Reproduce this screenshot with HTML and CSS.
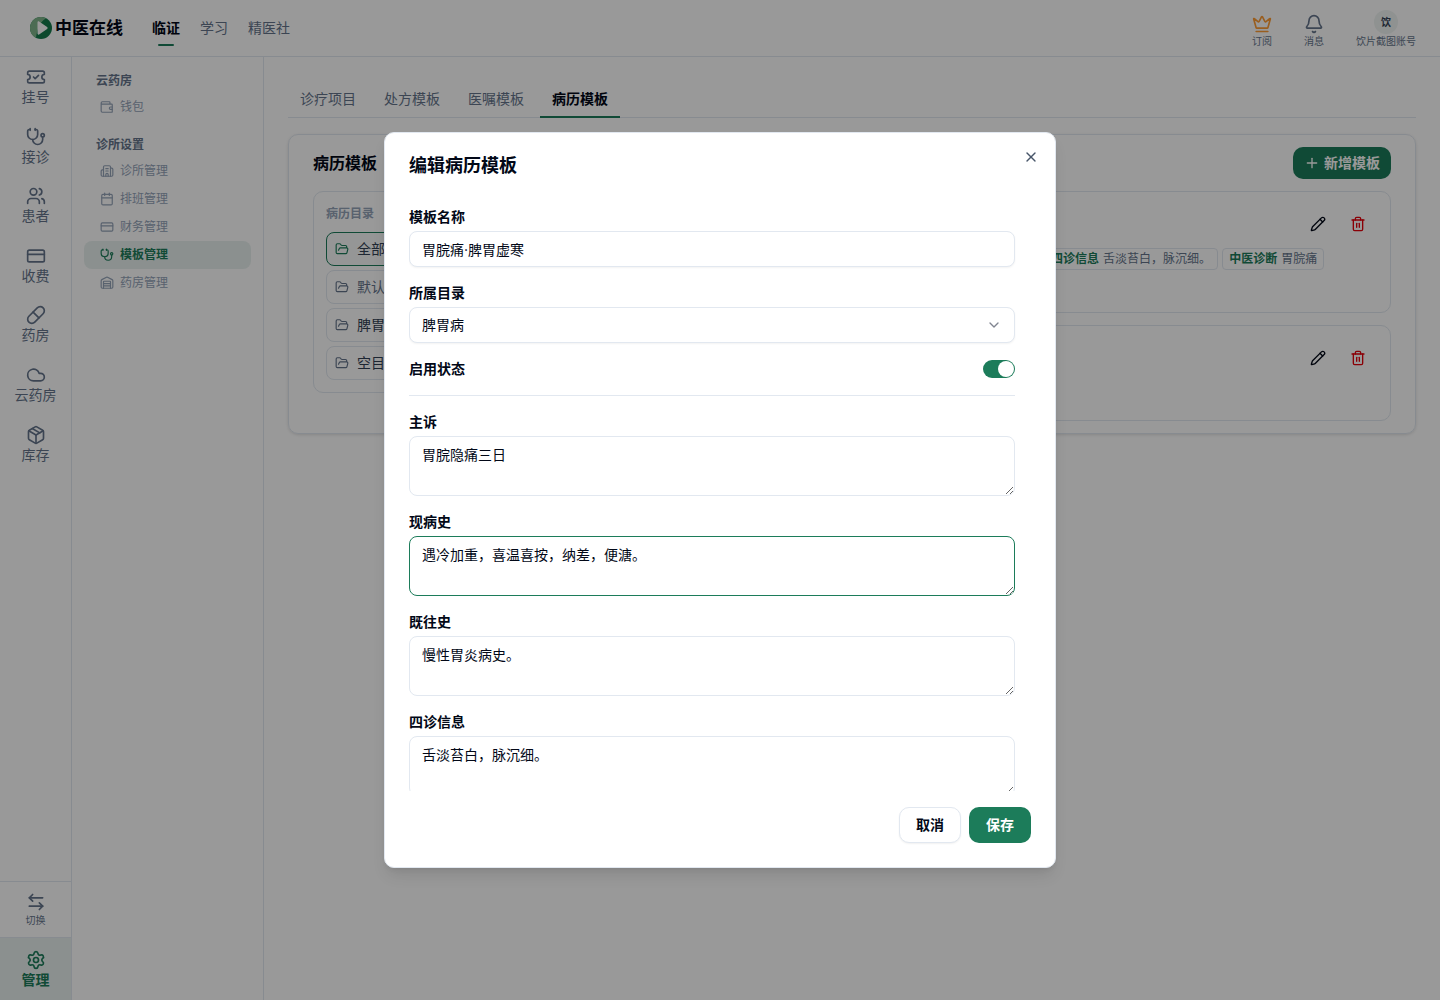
FILE: index.html
```html
<!DOCTYPE html>
<html lang="zh-CN">
<head>
<meta charset="utf-8">
<meta name="viewport" content="width=device-width, initial-scale=1">
<title>中医在线 - 模板管理</title>
<link rel="stylesheet" href="styles.css">
</head>
<body>
<svg class="sprite" aria-hidden="true">
  <symbol id="i-ticket" viewBox="0 0 24 24"><path d="M2 9a3 3 0 1 1 0 6v2a2 2 0 0 0 2 2h16a2 2 0 0 0 2-2v-2a3 3 0 1 1 0-6V7a2 2 0 0 0-2-2H4a2 2 0 0 0-2 2Z"/><path d="m9 12 2 2 4-4"/></symbol>
  <symbol id="i-steth" viewBox="0 0 24 24"><path d="M11 2v2"/><path d="M5 2v2"/><path d="M5 3H4a2 2 0 0 0-2 2v4a6 6 0 0 0 12 0V5a2 2 0 0 0-2-2h-1"/><path d="M8 15a6 6 0 0 0 12 0v-3"/><circle cx="20" cy="10" r="2"/></symbol>
  <symbol id="i-users" viewBox="0 0 24 24"><path d="M16 21v-2a4 4 0 0 0-4-4H6a4 4 0 0 0-4 4v2"/><circle cx="9" cy="7" r="4"/><path d="M22 21v-2a4 4 0 0 0-3-3.87"/><path d="M16 3.13a4 4 0 0 1 0 7.75"/></symbol>
  <symbol id="i-card" viewBox="0 0 24 24"><rect width="20" height="14" x="2" y="5" rx="2"/><path d="M2 10h20"/></symbol>
  <symbol id="i-pill" viewBox="0 0 24 24"><path d="m10.5 20.5 10-10a4.95 4.95 0 1 0-7-7l-10 10a4.95 4.95 0 1 0 7 7Z"/><path d="m8.5 8.5 7 7"/></symbol>
  <symbol id="i-cloud" viewBox="0 0 24 24"><path d="M17.5 19H9a7 7 0 1 1 6.71-9h1.79a4.5 4.5 0 1 1 0 9Z"/></symbol>
  <symbol id="i-box" viewBox="0 0 24 24"><path d="M11 21.73a2 2 0 0 0 2 0l7-4A2 2 0 0 0 21 16V8a2 2 0 0 0-1-1.73l-7-4a2 2 0 0 0-2 0l-7 4A2 2 0 0 0 3 8v8a2 2 0 0 0 1 1.73z"/><path d="M12 22V12"/><path d="M3.3 7 12 12l8.7-5"/><path d="m7.5 4.27 9 5.15"/></symbol>
  <symbol id="i-swap" viewBox="0 0 24 24"><path d="M8 3 4 7l4 4"/><path d="M4 7h16"/><path d="m16 21 4-4-4-4"/><path d="M20 17H4"/></symbol>
  <symbol id="i-gear" viewBox="0 0 24 24"><path d="M9.671 4.136a2.34 2.34 0 0 1 4.659 0 2.34 2.34 0 0 0 3.319 1.915 2.34 2.34 0 0 1 2.33 4.033 2.34 2.34 0 0 0 0 3.831 2.34 2.34 0 0 1-2.33 4.033 2.34 2.34 0 0 0-3.319 1.915 2.34 2.34 0 0 1-4.659 0 2.34 2.34 0 0 0-3.32-1.915 2.34 2.34 0 0 1-2.33-4.033 2.34 2.34 0 0 0 0-3.831A2.34 2.34 0 0 1 6.35 6.051a2.34 2.34 0 0 0 3.319-1.915"/><circle cx="12" cy="12" r="3"/></symbol>
  <symbol id="i-crown" viewBox="0 0 24 24"><path d="M11.562 3.266a.5.5 0 0 1 .876 0L15.39 8.87a1 1 0 0 0 1.516.294L21.183 5.5a.5.5 0 0 1 .798.519l-2.834 10.246a1 1 0 0 1-.956.734H5.81a1 1 0 0 1-.957-.734L2.02 6.02a.5.5 0 0 1 .798-.519l4.276 3.664a1 1 0 0 0 1.516-.294z"/><path d="M5 21h14"/></symbol>
  <symbol id="i-bell" viewBox="0 0 24 24"><path d="M10.268 21a2 2 0 0 0 3.464 0"/><path d="M3.262 15.326A1 1 0 0 0 4 17h16a1 1 0 0 0 .74-1.673C19.41 13.956 18 12.499 18 8A6 6 0 0 0 6 8c0 4.499-1.411 5.956-2.738 7.326"/></symbol>
  <symbol id="i-wallet" viewBox="0 0 24 24"><path d="M17 7V4a1 1 0 0 0-1-1H4a2 2 0 0 0 0 4h16a1 1 0 0 1 1 1v12a1 1 0 0 1-1 1H4a2 2 0 0 1-2-2V5"/><path d="M21 12h-3a2 2 0 0 0 0 4h3"/></symbol>
  <symbol id="i-building" viewBox="0 0 24 24"><path d="M10 12h4"/><path d="M10 8h4"/><path d="M14 21v-3a2 2 0 0 0-4 0v3"/><path d="M6 10H4a2 2 0 0 0-2 2v7a2 2 0 0 0 2 2h16a2 2 0 0 0 2-2V9a2 2 0 0 0-2-2h-2"/><path d="M6 21V5a2 2 0 0 1 2-2h8a2 2 0 0 1 2 2v16"/></symbol>
  <symbol id="i-calendar" viewBox="0 0 24 24"><path d="M8 2v4"/><path d="M16 2v4"/><rect width="18" height="18" x="3" y="4" rx="2"/><path d="M3 10h18"/></symbol>
  <symbol id="i-warehouse" viewBox="0 0 24 24"><path d="M18 21V10a1 1 0 0 0-1-1H7a1 1 0 0 0-1 1v11"/><path d="M22 19a2 2 0 0 1-2 2H4a2 2 0 0 1-2-2V8a2 2 0 0 1 1.132-1.803l7.95-3.974a2 2 0 0 1 1.837 0l7.948 3.974A2 2 0 0 1 22 8z"/><path d="M6 13h12"/><path d="M6 17h12"/></symbol>
  <symbol id="i-folder" viewBox="0 0 24 24"><path d="m6 14 1.5-2.9A2 2 0 0 1 9.24 10H20a2 2 0 0 1 1.94 2.5l-1.54 6a2 2 0 0 1-1.95 1.5H4a2 2 0 0 1-2-2V5a2 2 0 0 1 2-2h3.9a2 2 0 0 1 1.69.9l.81 1.2a2 2 0 0 0 1.67.9H18a2 2 0 0 1 2 2v2"/></symbol>
  <symbol id="i-plus" viewBox="0 0 24 24"><path d="M5 12h14"/><path d="M12 5v14"/></symbol>
  <symbol id="i-pencil" viewBox="0 0 24 24"><path d="M21.174 6.812a1 1 0 0 0-3.986-3.987L3.842 16.174a2 2 0 0 0-.5.83l-1.321 4.352a.5.5 0 0 0 .623.622l4.353-1.32a2 2 0 0 0 .83-.497z"/><path d="m15 5 4 4"/></symbol>
  <symbol id="i-trash" viewBox="0 0 24 24"><path d="M3 6h18"/><path d="M19 6v14c0 1-1 2-2 2H7c-1 0-2-1-2-2V6"/><path d="M8 6V4c0-1 1-2 2-2h4c1 0 2 1 2 2v2"/><path d="M10 11v6"/><path d="M14 11v6"/></symbol>
  <symbol id="i-x" viewBox="0 0 24 24"><path d="M18 6 6 18"/><path d="m6 6 12 12"/></symbol>
</svg>

<div class="app">
  <header class="topbar">
    <a class="brand" href="#">
      <svg class="logo" viewBox="0 0 22 22" aria-hidden="true">
        <circle cx="11" cy="11" r="11" fill="#157a4c"/>
        <path d="M16 1.200A11 11 0 0 0 6 20.800C7 15 8 6 16 1.200Z" fill="#7fb58a"/>
        <path d="M7.500 5.400v11.200c0 .9.900 1.400 1.600.900l8-5.400c.7-.5.700-1.500 0-2l-8-5.600c-.7-.5-1.600 0-1.600.9Z" fill="#fff"/>
      </svg>
      <span>中医在线</span>
    </a>
    <nav class="topnav">
      <a class="active" href="#">临证</a>
      <a href="#">学习</a>
      <a href="#">精医社</a>
    </nav>
    <div class="tools">
      <a class="tool" href="#"><svg class="icon icon-20 crown"><use href="#i-crown"/></svg><span>订阅</span></a>
      <a class="tool" href="#"><svg class="icon icon-20"><use href="#i-bell"/></svg><span>消息</span></a>
      <a class="tool" href="#"><span class="avatar">饮</span><span>饮片截图账号</span></a>
    </div>
  </header>

  <div class="columns">
    <aside class="rail">
      <nav class="rail-nav">
        <a href="#"><svg class="icon icon-20"><use href="#i-ticket"/></svg>挂号</a>
        <a href="#"><svg class="icon icon-20"><use href="#i-steth"/></svg>接诊</a>
        <a href="#"><svg class="icon icon-20"><use href="#i-users"/></svg>患者</a>
        <a href="#"><svg class="icon icon-20"><use href="#i-card"/></svg>收费</a>
        <a href="#"><svg class="icon icon-20"><use href="#i-pill"/></svg>药房</a>
        <a href="#"><svg class="icon icon-20"><use href="#i-cloud"/></svg>云药房</a>
        <a href="#"><svg class="icon icon-20"><use href="#i-box"/></svg>库存</a>
      </nav>
      <button class="rail-switch" type="button"><svg class="icon icon-20"><use href="#i-swap"/></svg>切换</button>
      <a class="rail-manage" href="#"><svg class="icon icon-20"><use href="#i-gear"/></svg>管理</a>
    </aside>

    <aside class="submenu">
      <section>
        <h2>云药房</h2>
        <a href="#"><svg class="icon icon-14"><use href="#i-wallet"/></svg>钱包</a>
      </section>
      <section>
        <h2>诊所设置</h2>
        <a href="#"><svg class="icon icon-14"><use href="#i-building"/></svg>诊所管理</a>
        <a href="#"><svg class="icon icon-14"><use href="#i-calendar"/></svg>排班管理</a>
        <a href="#"><svg class="icon icon-14"><use href="#i-card"/></svg>财务管理</a>
        <a class="active" href="#"><svg class="icon icon-14"><use href="#i-steth"/></svg>模板管理</a>
        <a href="#"><svg class="icon icon-14"><use href="#i-warehouse"/></svg>药房管理</a>
      </section>
    </aside>

    <main class="main">
      <nav class="tabs">
        <a href="#">诊疗项目</a>
        <a href="#">处方模板</a>
        <a href="#">医嘱模板</a>
        <a class="active" href="#">病历模板</a>
      </nav>
      <section class="panel">
        <div class="panel-head">
          <h1>病历模板</h1>
          <button class="btn btn-primary btn-add" type="button"><svg class="icon icon-16"><use href="#i-plus"/></svg>新增模板</button>
        </div>
        <div class="panel-body">
          <div class="folders">
            <h3>病历目录</h3>
            <button class="folder selected" type="button"><svg class="icon icon-14"><use href="#i-folder"/></svg>全部</button>
            <button class="folder muted" type="button"><svg class="icon icon-14"><use href="#i-folder"/></svg>默认目录</button>
            <button class="folder" type="button"><svg class="icon icon-14"><use href="#i-folder"/></svg>脾胃病</button>
            <button class="folder" type="button"><svg class="icon icon-14"><use href="#i-folder"/></svg>空目录</button>
          </div>
          <div class="templates">
            <article class="template">
              <div class="template-head">
                <h4>胃脘痛·脾胃虚寒</h4>
                <button type="button" aria-label="编辑"><svg class="icon icon-16"><use href="#i-pencil"/></svg></button>
                <button class="danger" type="button" aria-label="删除"><svg class="icon icon-16"><use href="#i-trash"/></svg></button>
              </div>
              <div class="tags">
                <span class="tag"><b>主诉</b>胃脘隐痛三日</span>
                <span class="tag"><b>现病史</b>遇冷加重，喜温喜按，纳差，便溏。</span>
                <span class="tag"><b>既往史</b>慢性胃炎病史。</span>
                <span class="tag"><b>四诊信息</b>舌淡苔白，脉沉细。</span>
                <span class="tag"><b>中医诊断</b>胃脘痛</span>
              </div>
            </article>
            <article class="template">
              <div class="template-head">
                <h4>空白模板</h4>
                <button type="button" aria-label="编辑"><svg class="icon icon-16"><use href="#i-pencil"/></svg></button>
                <button class="danger" type="button" aria-label="删除"><svg class="icon icon-16"><use href="#i-trash"/></svg></button>
              </div>
            </article>
          </div>
        </div>
      </section>
    </main>
  </div>

  <div class="overlay">
    <form class="dialog" role="dialog" aria-modal="true" aria-labelledby="dialog-title">
      <h2 id="dialog-title">编辑病历模板</h2>
      <button class="close" type="button" aria-label="关闭"><svg class="icon icon-16"><use href="#i-x"/></svg></button>
      <div class="dialog-body">
        <div class="field">
          <label for="name">模板名称</label>
          <input class="control" id="name" type="text" value="胃脘痛·脾胃虚寒">
        </div>
        <div class="field">
          <label for="folder">所属目录</label>
          <select class="control" id="folder"><option>脾胃病</option></select>
        </div>
        <div class="toggle">
          <label for="enabled">启用状态</label>
          <input class="switch" id="enabled" type="checkbox" role="switch" checked>
        </div>
        <hr>
        <div class="field">
          <label for="complaint">主诉</label>
          <textarea class="control" id="complaint">胃脘隐痛三日</textarea>
        </div>
        <div class="field">
          <label for="present">现病史</label>
          <textarea class="control current" id="present">遇冷加重，喜温喜按，纳差，便溏。</textarea>
        </div>
        <div class="field">
          <label for="past">既往史</label>
          <textarea class="control" id="past">慢性胃炎病史。</textarea>
        </div>
        <div class="field">
          <label for="exam">四诊信息</label>
          <textarea class="control" id="exam">舌淡苔白，脉沉细。</textarea>
        </div>
      </div>
      <div class="dialog-foot">
        <button class="btn btn-outline" type="button">取消</button>
        <button class="btn btn-primary" type="submit">保存</button>
      </div>
    </form>
  </div>
</div>
</body>
</html>
```
FILE: styles.css
```css
:root {
  --primary: #1c7c5a;
  --primary-soft: #e8f1ef;
  --ink: #020817;
  --slate: #64748b;
  --slate-light: #94a3b8;
  --line: #e2e8f0;
}

* { box-sizing: border-box; }

body {
  margin: 0;
  background: #fff;
  color: var(--ink);
  font-family: Inter, "Noto Sans CJK SC", sans-serif;
  font-size: 14px;
  line-height: 20px;
}

h1, h2, h3, h4 { margin: 0; }
a { color: inherit; text-decoration: none; }
button, input, select, textarea { font: inherit; color: inherit; }
button { border: 0; padding: 0; background: none; cursor: pointer; }

.sprite { display: none; }

.icon {
  flex: none;
  display: block;
  fill: none;
  stroke: currentColor;
  stroke-width: 2;
  stroke-linecap: round;
  stroke-linejoin: round;
}
.icon-14 { width: 14px; height: 14px; }
.icon-16 { width: 16px; height: 16px; }
.icon-20 { width: 20px; height: 20px; }

.app {
  position: relative;
  display: flex;
  flex-direction: column;
  height: calc(100vh - 1px);
  overflow: hidden;
}

/* Top bar */
.topbar {
  display: flex;
  align-items: center;
  height: 57px;
  padding: 0 24px 0 30px;
  border-bottom: 1px solid var(--line);
}
.brand {
  display: flex;
  align-items: center;
  gap: 3px;
  font-size: 17px;
  font-weight: 700;
}
.logo { width: 22px; height: 22px; }
.topnav {
  display: flex;
  gap: 20px;
  margin-left: 29px;
  color: var(--slate);
}
.topnav a { position: relative; }
.topnav .active { color: var(--ink); font-weight: 700; }
.topnav .active::after {
  content: "";
  position: absolute;
  left: 6px;
  right: 6px;
  bottom: -8px;
  height: 2px;
  border-radius: 1px;
  background: var(--primary);
}
.tools {
  display: flex;
  align-items: flex-end;
  gap: 32px;
  margin-left: auto;
  padding-top: 2px;
}
.tool {
  display: flex;
  flex-direction: column;
  align-items: center;
  color: var(--slate);
  font-size: 10px;
  line-height: 14px;
}
.crown { color: #ff9d35; }
.avatar {
  width: 24px;
  height: 24px;
  border-radius: 50%;
  background: #eef4f2;
  color: #334155;
  font-weight: 700;
  line-height: 24px;
  text-align: center;
}

/* Columns */
.columns { display: flex; flex: 1; min-height: 0; }
.rail {
  display: flex;
  flex-direction: column;
  width: 72px;
  border-right: 1px solid var(--line);
  color: var(--slate);
}
.rail-nav { flex: 1; }
.rail-nav a, .rail-manage, .rail-switch {
  display: flex;
  flex-direction: column;
  align-items: center;
  padding: 10px 0;
  line-height: 1.4;
}
.rail-switch {
  border-top: 1px solid var(--line);
  gap: 1px;
  font-size: 10px;
}
.rail-manage {
  padding-top: 12px;
  border-top: 1px solid var(--line);
  background: var(--primary-soft);
  color: var(--primary);
  font-weight: 700;
}
.submenu {
  display: flex;
  flex-direction: column;
  gap: 12px;
  width: 192px;
  padding: 12px;
  border-right: 1px solid var(--line);
  font-size: 12px;
}
.submenu h2 {
  padding-left: 12px;
  color: var(--slate);
  font-size: 12px;
  font-weight: 700;
  line-height: 24px;
}
.submenu a {
  display: flex;
  align-items: center;
  gap: 6px;
  height: 28px;
  padding: 0 16px;
  border-radius: 8px;
  color: var(--slate-light);
}
.submenu .active {
  background: var(--primary-soft);
  color: var(--primary);
  font-weight: 700;
}

/* Main area */
.main { flex: 1; min-width: 0; padding: 24px; }
.tabs {
  display: flex;
  gap: 4px;
  height: 37px;
  margin-bottom: 16px;
  border-bottom: 1px solid var(--line);
  color: var(--slate);
}
.tabs a { height: 37px; padding: 8px 12px 7px; }
.tabs .active {
  border-bottom: 2px solid var(--primary);
  color: var(--ink);
  font-weight: 700;
}
.panel {
  padding: 12px 24px;
  border: 1px solid var(--line);
  border-radius: 10px;
  box-shadow: 0 1px 3px rgba(0, 0, 0, .12);
}
.panel-head {
  display: flex;
  align-items: center;
  justify-content: space-between;
  margin-bottom: 12px;
}
.panel-head h1 { font-size: 16px; font-weight: 700; }
.panel-body { display: flex; align-items: flex-start; gap: 12px; }

.btn {
  display: flex;
  align-items: center;
  justify-content: center;
  height: 36px;
  padding: 0 17px;
  border-radius: 10px;
  font-weight: 700;
}
.btn-primary { background: var(--primary); color: #fff; }
.btn-outline {
  padding: 0 16px;
  border: 1px solid var(--line);
  background: #fff;
  box-shadow: 0 1px 2px rgba(0, 0, 0, .06);
}
.btn-add { gap: 4px; height: 32px; padding: 0 11px; }

.folders {
  display: flex;
  flex-direction: column;
  gap: 4px;
  flex: none;
  width: 196px;
  padding: 12px;
  border: 1px solid var(--line);
  border-radius: 10px;
}
.folders h3 {
  margin-bottom: 4px;
  color: var(--slate-light);
  font-size: 12px;
  font-weight: 700;
}
.folder {
  display: flex;
  align-items: center;
  gap: 8px;
  height: 34px;
  padding: 0 8px;
  border: 1px solid var(--line);
  border-radius: 8px;
  color: #334155;
}
.folder .icon { color: var(--slate); }
.folder.muted { color: var(--slate); }
.folder.selected { border-color: var(--primary); background: #f8fbfa; }
.folder.selected .icon { color: var(--primary); }

.templates {
  display: flex;
  flex-direction: column;
  gap: 12px;
  flex: 1;
  min-width: 0;
}
.template {
  padding: 12px 12px 42px;
  border: 1px solid var(--line);
  border-radius: 10px;
}
.template-head { display: flex; align-items: center; height: 40px; }
.template-head h4 { flex: 1; }
.template-head button {
  display: grid;
  place-items: center;
  width: 40px;
  height: 40px;
}
.template-head .danger { color: #e7000b; }
.tags { display: flex; flex-wrap: wrap; gap: 4px; margin-top: 4px; }
.tag {
  display: flex;
  gap: 4px;
  padding: 0 6px;
  border: 1px solid var(--line);
  border-radius: 4px;
  color: var(--slate);
  font-size: 12px;
}
.tag b { color: var(--primary); }

/* Dialog */
.overlay {
  position: absolute;
  inset: 0;
  display: grid;
  place-items: center;
  background: rgba(0, 0, 0, .4);
}
.dialog {
  position: relative;
  display: flex;
  flex-direction: column;
  gap: 16px;
  width: 100%;
  max-width: 672px;
  max-height: calc(100vh - 265px);
  padding: 24px;
  border: 1px solid var(--line);
  border-radius: 10px;
  background: #fff;
  box-shadow: 0 10px 15px -3px rgba(0, 0, 0, .1), 0 4px 6px -4px rgba(0, 0, 0, .1);
}
.dialog h2 { font-size: 18px; font-weight: 700; line-height: 18px; }
.close {
  position: absolute;
  top: 16px;
  right: 16px;
  color: #475569;
}
.dialog-body {
  display: flex;
  flex-direction: column;
  flex: 1;
  gap: 16px;
  min-height: 0;
  padding: 16px 16px 16px 0;
  overflow-y: auto;
  scrollbar-width: none;
}
.dialog-body label { font-weight: 700; }
.field { display: flex; flex-direction: column; flex: none; gap: 4px; }
.control {
  width: 100%;
  height: 36px;
  padding: 0 12px;
  border: 1px solid var(--line);
  border-radius: 8px;
  outline: 0;
  background: #fff;
  box-shadow: 0 1px 2px rgba(0, 0, 0, .05);
}
textarea.control {
  display: block;
  height: 60px;
  padding: 8px 12px;
  resize: vertical;
  box-shadow: none;
}
.control.current { border-color: var(--primary); }
select.control {
  appearance: none;
  background: #fff url("data:image/svg+xml,%3Csvg xmlns='http://www.w3.org/2000/svg' viewBox='0 0 24 24' fill='none' stroke='%23808590' stroke-width='2' stroke-linecap='round' stroke-linejoin='round'%3E%3Cpath d='m6 9 6 6 6-6'/%3E%3C/svg%3E") no-repeat right 12px center / 16px;
}
.toggle {
  display: flex;
  align-items: center;
  justify-content: space-between;
  flex: none;
}
.switch {
  appearance: none;
  display: flex;
  justify-content: flex-end;
  width: 32px;
  height: 18px;
  margin: 0;
  padding: 1px;
  border-radius: 9px;
  background: var(--primary);
}
.switch::before {
  content: "";
  width: 16px;
  height: 16px;
  border-radius: 50%;
  background: #fff;
}
hr {
  flex: none;
  width: 100%;
  height: 1px;
  margin: 0;
  border: 0;
  background: var(--line);
}
.dialog-foot { display: flex; justify-content: flex-end; gap: 8px; }
```
